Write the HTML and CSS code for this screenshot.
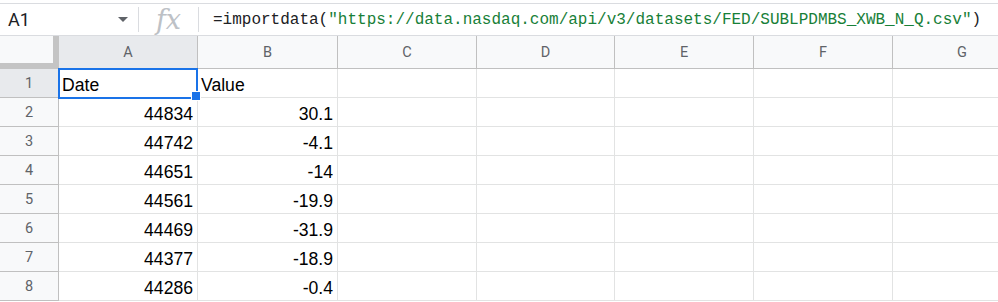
FILE: index.html
```html
<!DOCTYPE html>
<html lang="en">
  <head>
    <meta charset="UTF-8" />
    <meta name="viewport" content="width=device-width, initial-scale=1.0" />
    <title>Sheet</title>
    <link rel="stylesheet" href="styles.css">
  </head>
  <body>
    <div class="formula-bar">
      <div class="name-box">
        <span>A1</span>
        <span class="caret"></span>
      </div>
      <div class="divider"></div>
      <div class="fx">fx</div>
      <div class="divider"></div>
      <div class="formula">=importdata(<span class="str">"https://data.nasdaq.com/api/v3/datasets/FED/SUBLPDMBS_XWB_N_Q.csv"</span>)</div>
    </div>

    <div class="sheet">
      <div class="corner"></div>
      <div class="col-head active">A</div>
      <div class="col-head">B</div>
      <div class="col-head">C</div>
      <div class="col-head">D</div>
      <div class="col-head">E</div>
      <div class="col-head">F</div>
      <div class="col-head">G</div>

      <div class="row-head active">1</div>
      <div class="cell sel-cell">Date<div class="selection"></div><div class="handle"></div></div>
      <div class="cell">Value</div>
      <div class="cell"></div><div class="cell"></div><div class="cell"></div><div class="cell"></div><div class="cell"></div>

      <div class="row-head">2</div>
      <div class="cell num">44834</div>
      <div class="cell num">30.1</div>
      <div class="cell"></div><div class="cell"></div><div class="cell"></div><div class="cell"></div><div class="cell"></div>

      <div class="row-head">3</div>
      <div class="cell num">44742</div>
      <div class="cell num">-4.1</div>
      <div class="cell"></div><div class="cell"></div><div class="cell"></div><div class="cell"></div><div class="cell"></div>

      <div class="row-head">4</div>
      <div class="cell num">44651</div>
      <div class="cell num">-14</div>
      <div class="cell"></div><div class="cell"></div><div class="cell"></div><div class="cell"></div><div class="cell"></div>

      <div class="row-head">5</div>
      <div class="cell num">44561</div>
      <div class="cell num">-19.9</div>
      <div class="cell"></div><div class="cell"></div><div class="cell"></div><div class="cell"></div><div class="cell"></div>

      <div class="row-head">6</div>
      <div class="cell num">44469</div>
      <div class="cell num">-31.9</div>
      <div class="cell"></div><div class="cell"></div><div class="cell"></div><div class="cell"></div><div class="cell"></div>

      <div class="row-head">7</div>
      <div class="cell num">44377</div>
      <div class="cell num">-18.9</div>
      <div class="cell"></div><div class="cell"></div><div class="cell"></div><div class="cell"></div><div class="cell"></div>

      <div class="row-head">8</div>
      <div class="cell num">44286</div>
      <div class="cell num">-0.4</div>
      <div class="cell"></div><div class="cell"></div><div class="cell"></div><div class="cell"></div><div class="cell"></div>
    </div>
  </body>
</html>
```

FILE: styles.css
```css
body {
  margin: 0;
  overflow: hidden;
  background: #fff;
  font-family: Roboto, "Liberation Sans", sans-serif;
}
.formula-bar {
  display: flex;
  align-items: center;
  height: 31px;
  margin-top: 3px;
  border-top: 1px solid #dadce0;
  border-bottom: 1px solid #dadce0;
}
.name-box {
  width: 138px;
  box-sizing: border-box;
  padding: 0 10px 0 8px;
  display: flex;
  justify-content: space-between;
  align-items: center;
  font-size: 18px;
  color: #202124;
}
.caret {
  width: 0;
  height: 0;
  border-left: 5px solid transparent;
  border-right: 5px solid transparent;
  border-top: 5px solid #5f6368;
}
.divider {
  width: 1px;
  height: 25px;
  background: #dadce0;
}
.fx {
  width: 59px;
  text-align: center;
  font: italic 27px "DejaVu Serif", serif;
  color: #bdc1c6;
  line-height: 31px;
}
.formula {
  padding-left: 14px;
  font: 16px "Liberation Mono", monospace;
  color: #202124;
  white-space: nowrap;
}
.str {
  color: #188038;
}
.sheet {
  display: grid;
  grid-template-columns: 59px 139px 140px 139px 138px 139px 139px 139px;
  grid-template-rows: 33px;
  grid-auto-rows: 29px;
}
.corner {
  background: #f8f9fa;
  border-right: 6px solid #c4c4c4;
  border-bottom: 6px solid #c4c4c4;
}
.col-head,
.row-head {
  display: flex;
  justify-content: center;
  align-items: center;
  background: #f8f9fa;
  border-right: 1px solid #c0c0c0;
  border-bottom: 1px solid #c0c0c0;
  font-size: 14.5px;
  color: #5f6368;
}
.active {
  background: #e8eaed;
}
.cell {
  display: flex;
  align-items: flex-end;
  padding: 0 4px 1px 3px;
  border-right: 1px solid #e2e3e3;
  border-bottom: 1px solid #e2e3e3;
  font: 17.6px "Liberation Sans", Arial, sans-serif;
  color: #000;
  white-space: nowrap;
}
.num {
  justify-content: flex-end;
}
.sel-cell {
  position: relative;
}
.selection {
  position: absolute;
  left: -1px;
  top: -1px;
  width: 140px;
  height: 31px;
  box-sizing: border-box;
  border: 2px solid #1a73e8;
}
.handle {
  position: absolute;
  left: 132px;
  top: 22px;
  width: 8px;
  height: 8px;
  background: #1a73e8;
  border: 1px solid #fff;
}
```
